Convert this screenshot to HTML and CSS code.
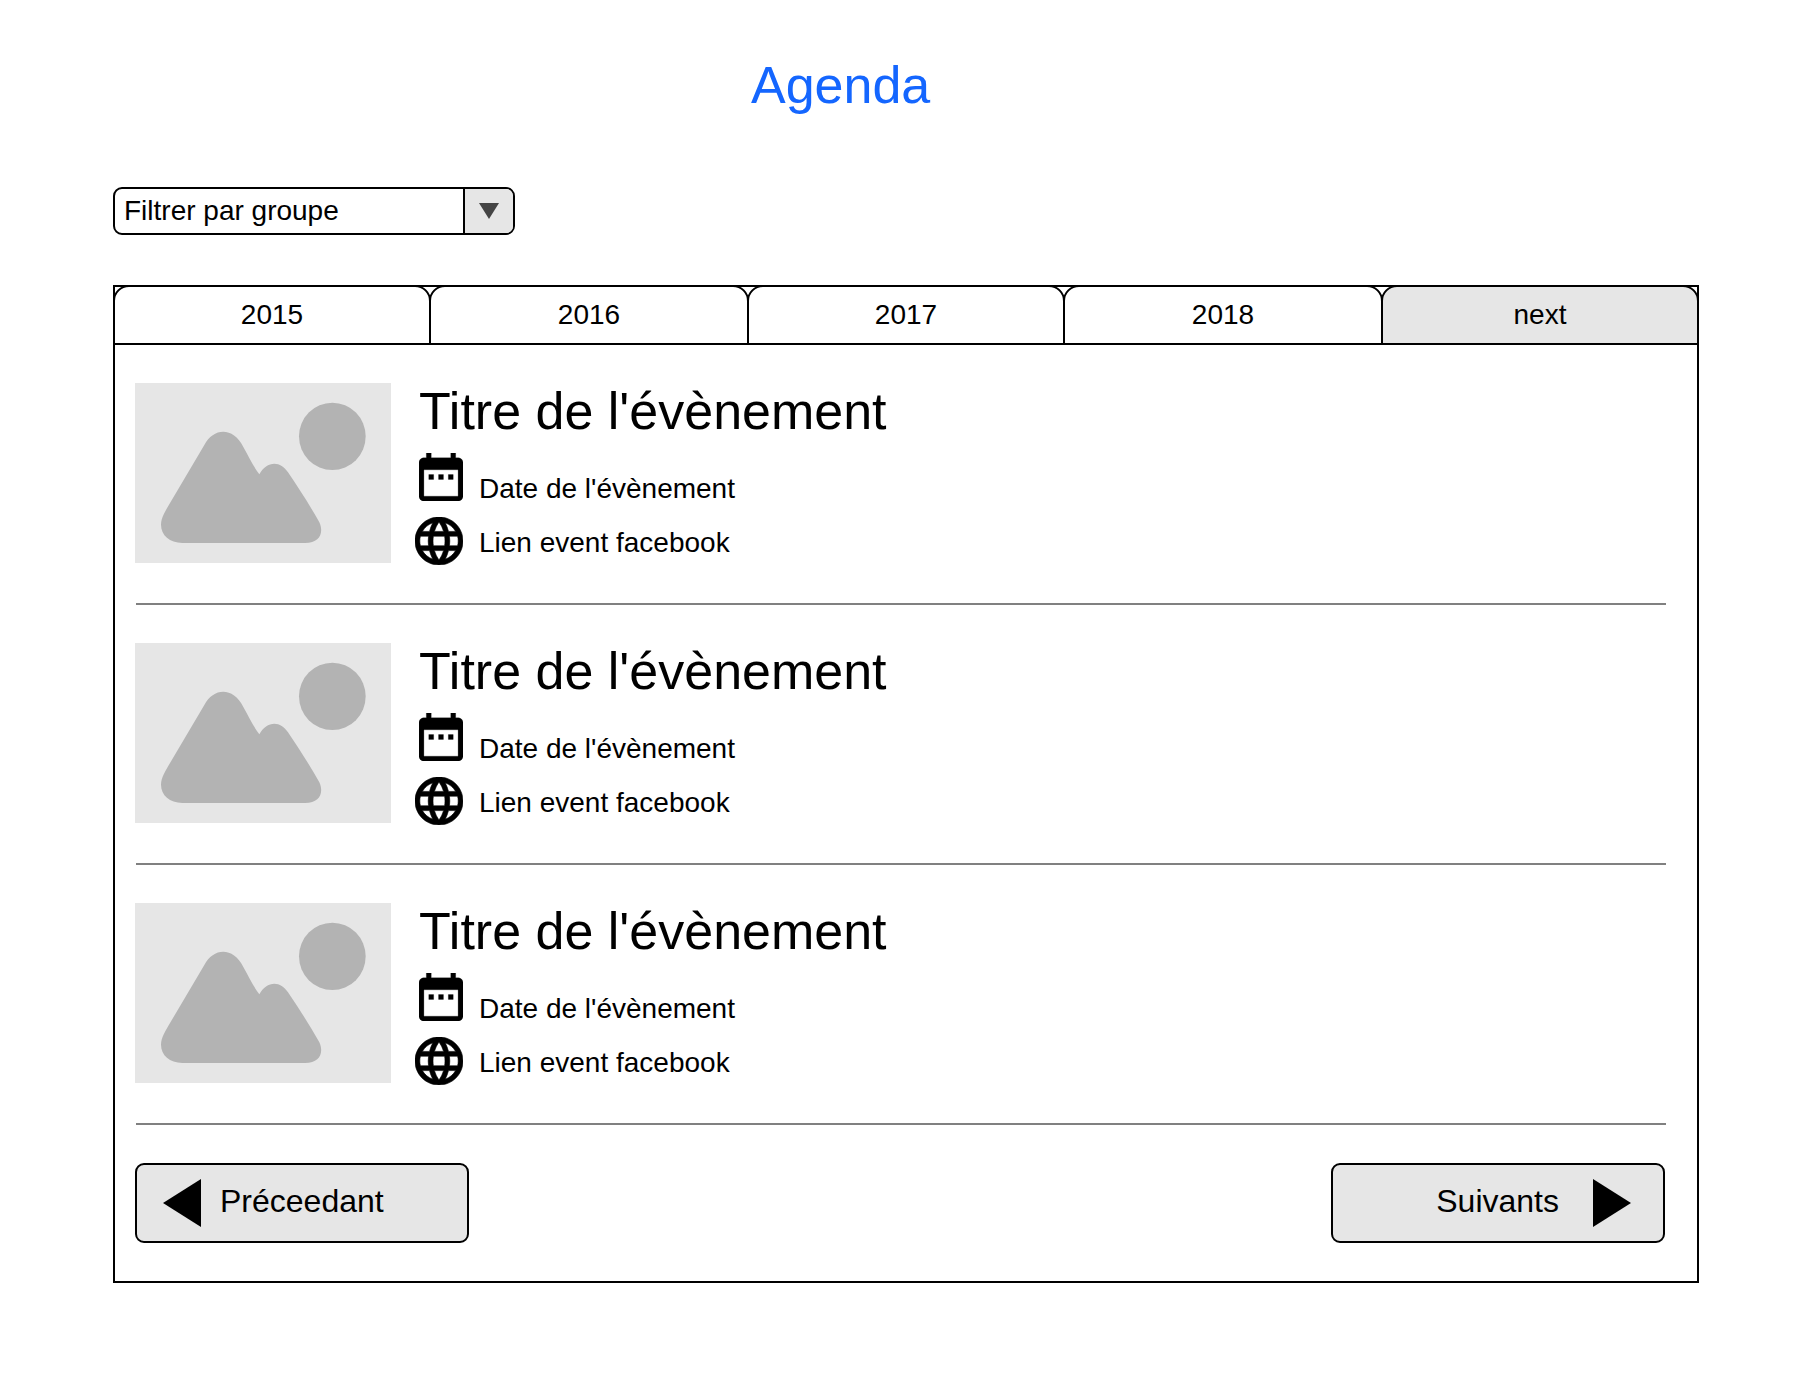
FILE: index.html
```html
<!DOCTYPE html>
<html lang="fr">
<head>
<meta charset="utf-8">
<title>Agenda</title>
<link rel="stylesheet" href="styles.css">
</head>
<body>
<svg class="defs" aria-hidden="true">
  <symbol id="picture" viewBox="0 0 768 540">
    <path d="M208 186C235 135 294 130 325 192C340 219 354 249 373 274C394 233 437 232 459 268C492 317 524 366 553 418C567 450 555 480 510 480H142C92 480 62 440 87 392C90 386 94 379 98 372Z"/>
    <ellipse cx="592" cy="160" rx="100" ry="101"/>
  </symbol>
  <symbol id="calendar" viewBox="3 2 18 20" preserveAspectRatio="none">
    <path d="M9 11H7v2h2v-2zm4 0h-2v2h2v-2zm4 0h-2v2h2v-2zm2-7h-1V2h-2v2H8V2H6v2H5c-1.11 0-1.99.9-1.99 2L3 20c0 1.1.89 2 2 2h14c1.1 0 2-.9 2-2V6c0-1.1-.9-2-2-2zm0 16H5V9h14v11z"/>
  </symbol>
  <symbol id="globe" viewBox="2 2 20 20">
    <path d="M11.99 2C6.47 2 2 6.48 2 12s4.47 10 9.99 10C17.52 22 22 17.52 22 12S17.52 2 11.99 2zm6.93 6h-2.95c-.32-1.25-.78-2.45-1.38-3.56 1.84.63 3.37 1.91 4.33 3.56zM12 4.04c.83 1.2 1.48 2.53 1.91 3.96h-3.82c.43-1.43 1.08-2.76 1.91-3.96zM4.26 14C4.1 13.36 4 12.69 4 12s.1-1.36.26-2h3.38c-.08.66-.14 1.32-.14 2 0 .68.06 1.34.14 2H4.26zm.82 2h2.95c.32 1.25.78 2.45 1.38 3.56-1.84-.63-3.37-1.9-4.33-3.56zm2.95-8H5.08c.96-1.66 2.49-2.93 4.33-3.56C8.81 5.55 8.35 6.75 8.03 8zM12 19.96c-.83-1.2-1.48-2.53-1.91-3.96h3.82c-.43 1.43-1.08 2.76-1.91 3.96zM14.34 14H9.66c-.09-.66-.16-1.32-.16-2 0-.68.07-1.35.16-2h4.68c.09.65.16 1.32.16 2 0 .68-.07 1.34-.16 2zm.25 5.56c.6-1.11 1.06-2.31 1.38-3.56h2.95c-.96 1.65-2.49 2.93-4.33 3.56zM16.36 14c.08-.66.14-1.32.14-2 0-.68-.06-1.34-.14-2h3.38c.16.64.26 1.31.26 2s-.1 1.36-.26 2h-3.38z"/>
  </symbol>
</svg>
<main class="page">
  <h1 class="page-title">Agenda</h1>
  <div class="select">
    <span class="select-label">Filtrer par groupe</span>
    <span class="select-toggle"><svg class="caret" viewBox="0 0 20 16"><path d="M0 0H20L10 16Z"/></svg></span>
  </div>
  <section class="panel">
    <nav class="tabs">
      <a class="tab">2015</a>
      <a class="tab">2016</a>
      <a class="tab">2017</a>
      <a class="tab">2018</a>
      <a class="tab tab-active">next</a>
    </nav>
    <div class="events">
      <article class="event">
        <svg class="thumb"><use href="#picture"/></svg>
        <div class="info">
          <h2 class="event-title">Titre de l'évènement</h2>
          <div class="meta meta-date"><svg class="icon-calendar"><use href="#calendar"/></svg><span class="meta-text">Date de l'évènement</span></div>
          <div class="meta meta-link"><svg class="icon-globe"><use href="#globe"/></svg><span class="meta-text">Lien event facebook</span></div>
        </div>
      </article>
      <article class="event">
        <svg class="thumb"><use href="#picture"/></svg>
        <div class="info">
          <h2 class="event-title">Titre de l'évènement</h2>
          <div class="meta meta-date"><svg class="icon-calendar"><use href="#calendar"/></svg><span class="meta-text">Date de l'évènement</span></div>
          <div class="meta meta-link"><svg class="icon-globe"><use href="#globe"/></svg><span class="meta-text">Lien event facebook</span></div>
        </div>
      </article>
      <article class="event">
        <svg class="thumb"><use href="#picture"/></svg>
        <div class="info">
          <h2 class="event-title">Titre de l'évènement</h2>
          <div class="meta meta-date"><svg class="icon-calendar"><use href="#calendar"/></svg><span class="meta-text">Date de l'évènement</span></div>
          <div class="meta meta-link"><svg class="icon-globe"><use href="#globe"/></svg><span class="meta-text">Lien event facebook</span></div>
        </div>
      </article>
    </div>
    <div class="pager">
      <button class="button button-prev"><svg class="arrow" viewBox="0 0 38 48"><path d="M38 0V48L0 24Z"/></svg><span class="button-text">Préceedant</span></button>
      <button class="button button-next"><span class="button-text">Suivants</span><svg class="arrow" viewBox="0 0 38 48"><path d="M0 0V48L38 24Z"/></svg></button>
    </div>
  </section>
</main>
</body>
</html>
```
FILE: styles.css
```css
* {
  box-sizing: border-box;
}

body {
  margin: 0;
  background: #fff;
  color: #000;
  font-family: "Liberation Sans", Arial, Helvetica, sans-serif;
  font-size: 28px;
  line-height: 32px;
}

svg {
  display: block;
  flex: none;
}

.defs {
  display: none;
}

.page {
  width: 1586px;
  margin-left: 113px;
  padding-top: 55px;
}

.page-title {
  margin: 0 0 72px 638px;
  color: #1466ff;
  font-size: 52px;
  font-weight: 400;
  line-height: 60px;
}

.select {
  display: flex;
  width: 402px;
  height: 48px;
  border: 2px solid #000;
  border-radius: 9px;
  overflow: hidden;
}

.select-label {
  width: 348px;
  padding: 6px 0 0 9px;
}

.select-toggle {
  display: flex;
  flex: 1;
  padding: 14px 0 0 14px;
  border-left: 2px solid #000;
  background: #e6e6e6;
}

.caret {
  width: 20px;
  height: 16px;
  fill: #444;
}

.panel {
  height: 998px;
  margin-top: 50px;
  border: 2px solid #000;
}

.tabs {
  display: grid;
  grid-template-columns: 316px 318px 316px 318px 316px;
  margin: -2px 0 0 -2px;
}

.tab {
  width: calc(100% + 2px);
  height: 60px;
  padding-top: 12px;
  border: 2px solid #000;
  border-radius: 16px 16px 0 0;
  text-align: center;
}

.tab-active {
  background: #e6e6e6;
}

.events {
  padding: 0 31px 0 21px;
}

.event {
  display: flex;
  height: 260px;
  padding-top: 38px;
  border-bottom: 2px solid #808080;
}

.thumb {
  width: 256px;
  height: 180px;
  margin-left: -1px;
  background: #e6e6e6;
  fill: #b3b3b3;
}

.info {
  padding-left: 24px;
}

.event-title {
  margin: -2px 0 12px 4px;
  font-size: 52px;
  font-weight: 400;
  line-height: 60px;
}

.meta {
  display: flex;
  height: 48px;
}

.meta-date {
  padding-left: 4px;
}

.meta-link {
  margin-top: 16px;
}

.meta-text {
  padding-left: 16px;
}

.meta-date .meta-text {
  padding-top: 20px;
}

.meta-link .meta-text {
  padding-top: 10px;
}

.icon-calendar {
  width: 44px;
  height: 48px;
  stroke: #000;
  stroke-width: 0.1;
}

.icon-globe {
  width: 48px;
  height: 48px;
  stroke: #000;
  stroke-width: 0.25;
}

.pager {
  display: flex;
  justify-content: space-between;
  padding: 38px 32px 0 20px;
}

.button {
  display: flex;
  width: 334px;
  height: 80px;
  padding: 14px 0 0;
  border: 2px solid #000;
  border-radius: 9px;
  background: #e6e6e6;
  color: #000;
  font: 32px/38px "Liberation Sans", Arial, Helvetica, sans-serif;
}

.button-prev {
  padding-left: 26px;
  gap: 19px;
}

.button-next {
  justify-content: flex-end;
  padding-right: 32px;
  gap: 34px;
}

.button-text {
  padding-top: 3px;
}

.arrow {
  width: 38px;
  height: 48px;
}
```
